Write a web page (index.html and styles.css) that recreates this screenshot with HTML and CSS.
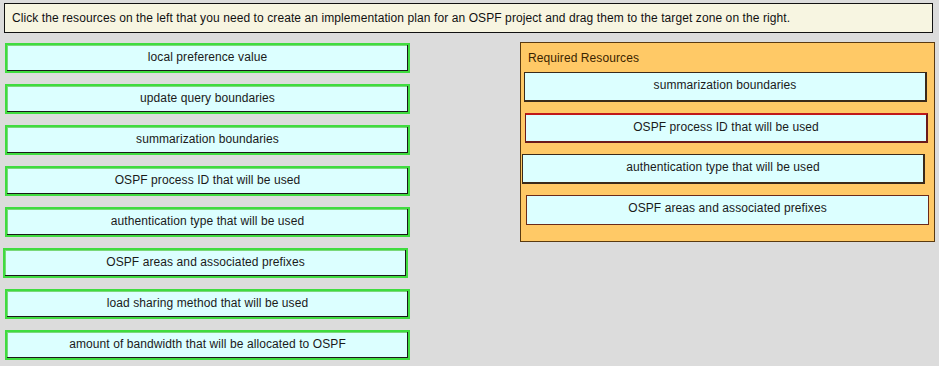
FILE: index.html
```html
<!DOCTYPE html>
<html>
<head>
<meta charset="utf-8">
<link rel="stylesheet" href="styles.css">
</head>
<body>
<div class="page">
  <div class="instructions">Click the resources on the left that you need to create an implementation plan for an OSPF project and drag them to the target zone on the right.</div>
  <div class="main">
    <div class="left">
      <div class="item">local preference value</div>
      <div class="item">update query boundaries</div>
      <div class="item">summarization boundaries</div>
      <div class="item">OSPF process ID that will be used</div>
      <div class="item">authentication type that will be used</div>
      <div class="item shift-left">OSPF areas and associated prefixes</div>
      <div class="item">load sharing method that will be used</div>
      <div class="item">amount of bandwidth that will be allocated to OSPF</div>
    </div>
    <div class="target">
      <div class="target-title">Required Resources</div>
      <div class="target-items">
        <div class="slot">summarization boundaries</div>
        <div class="slot slot-red">OSPF process ID that will be used</div>
        <div class="slot slot-left">authentication type that will be used</div>
        <div class="slot slot-right">OSPF areas and associated prefixes</div>
      </div>
    </div>
  </div>
</div>
</body>
</html>
```
FILE: styles.css
```css
html, body {
  margin: 0;
  padding: 0;
  background: #dcdcdc;
  font-family: "Liberation Sans", Arial, sans-serif;
  font-size: 12px;
  letter-spacing: 0.09px;
  color: #111;
}
.page {
  width: 939px;
  height: 366px;
  padding: 3px 0 0 4px;
  box-sizing: border-box;
  display: flex;
  flex-direction: column;
}
.instructions {
  width: 929px;
  height: 30px;
  box-sizing: border-box;
  border: 1px solid #111;
  background: #f7f5e1;
  padding: 0 0 0 7px;
  line-height: 29px;
  color: #111;
}
.main {
  display: flex;
  margin-top: 10px;
}
.left {
  width: 405px;
  display: flex;
  flex-direction: column;
  gap: 11px;
  padding-left: 1px;
}
.item {
  height: 30px;
  box-sizing: border-box;
  background: #dcffff;
  border: 2px solid #3fdc3f;
  box-shadow: inset -1px -1px 0 #1a1a1a, inset 1px 1px 0 #7ad87a;
  text-align: center;
  line-height: 25px;
  color: #1a1a1a;
}
.shift-left {
  margin-left: -2px;
  margin-right: 2px;
}
.target {
  margin-left: 110px;
  margin-top: -1px;
  width: 415px;
  height: 200px;
  box-sizing: border-box;
  background: #ffc966;
  border: 1px solid #5a3a10;
  padding: 8px 7px 0 3px;
}
.target-title {
  color: #3a2400;
  padding-left: 4px;
  line-height: 14px;
  height: 21px;
}
.target-items {
  display: flex;
  flex-direction: column;
  gap: 11px;
}
.slot {
  height: 30px;
  box-sizing: border-box;
  background: #dcffff;
  border: 1px solid #3a2a1a;
  border-right-width: 2px;
  border-bottom-width: 2px;
  text-align: center;
  line-height: 25px;
  color: #1a1a1a;
}
.slot-red {
  border-top: 2px solid #c01818;
  border-color: #c01818 #6a1a1a #6a1a1a #6a1a1a;
  margin-left: 1px;
  margin-right: -1px;
}
.slot-left {
  margin-left: -2px;
  margin-right: 2px;
}
.slot-right {
  margin-left: 2px;
  margin-right: -2px;
  border-color: #6a2a1a;
  border-width: 1px;
}
```
